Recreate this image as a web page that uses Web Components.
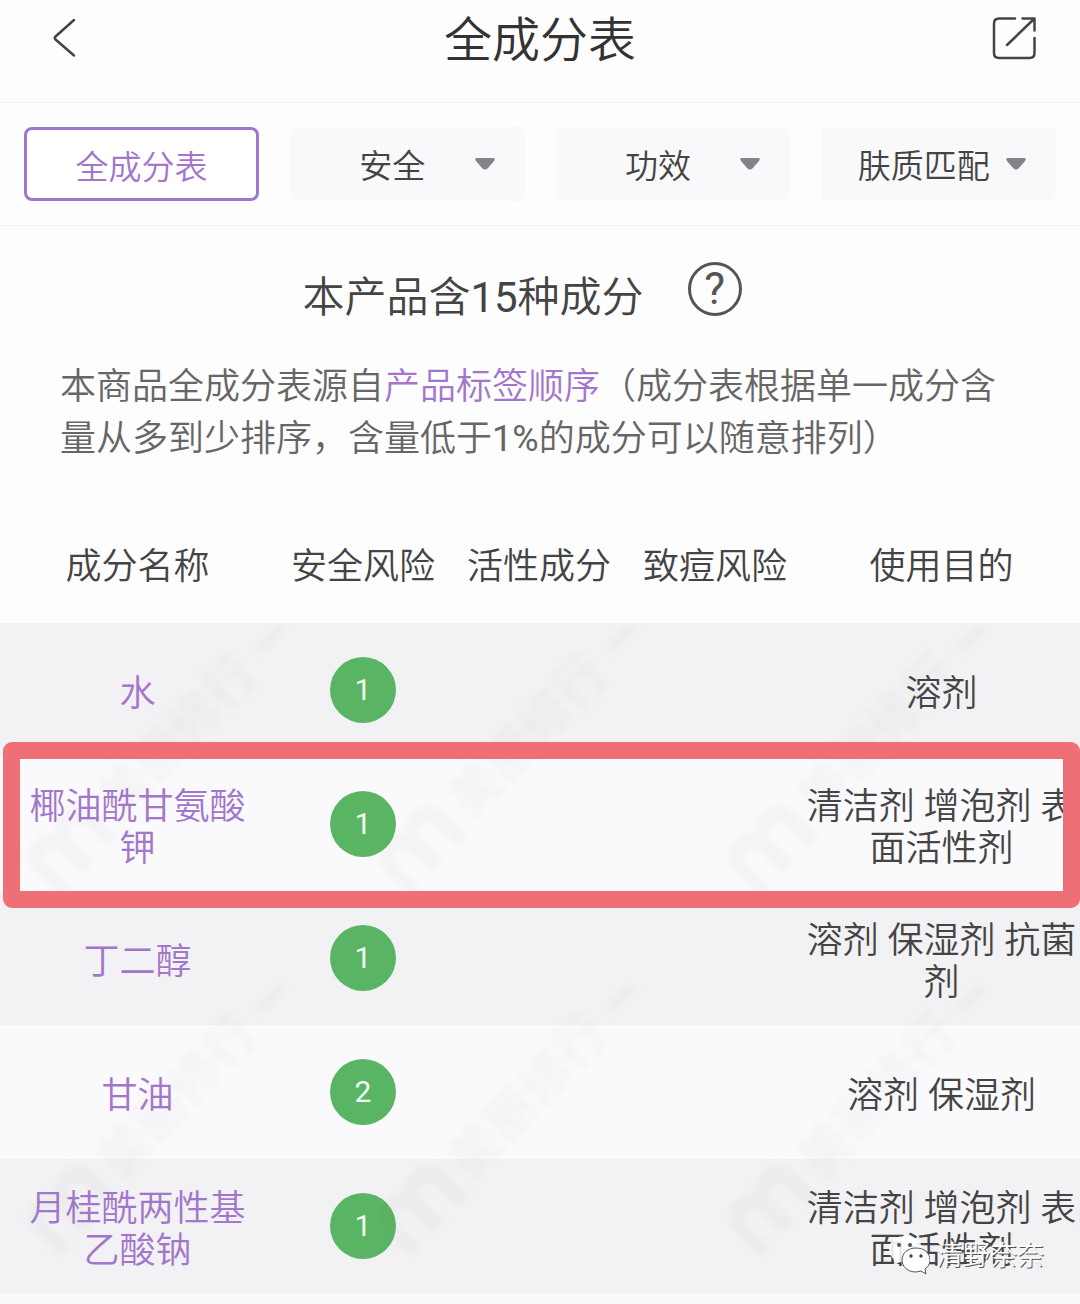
<!DOCTYPE html>
<html lang="zh-CN">
<head>
<meta charset="utf-8">
<meta name="viewport" content="width=device-width, initial-scale=1">
<title>全成分表</title>
<style>
  body {
    margin: 0;
    background: #fefdfe;
    color: #444;
    font-family: Roboto, "Noto Sans CJK SC", sans-serif;
    font-weight: 350;
    --purple: #a376cc;
    --line: #f1f0f2;
  }
</style>
</head>
<body>
<ingredient-page></ingredient-page>

<script>
class TopBar extends HTMLElement {
  constructor() {
    super();
    this.attachShadow({ mode: "open" });
    this.shadowRoot.innerHTML = `
      <style>
        :host {
          display: grid;
          grid-template-columns: 1fr auto 1fr;
          align-items: center;
          padding: 0 44px 24px;
          border-bottom: 1px solid var(--line);
        }
        h1 {
          margin: 0;
          padding-top: 4px;
          font-size: 48px;
          line-height: 74px;
          font-weight: 350;
          color: #333;
        }
        button {
          width: 44px;
          height: 44px;
          padding: 0;
          border: 0;
          background: none;
          cursor: pointer;
        }
        button:last-child {
          justify-self: end;
        }
        svg {
          display: block;
          fill: none;
          stroke: #444;
          stroke-width: 2.5;
          stroke-linecap: round;
          stroke-linejoin: round;
        }
      </style>
      <button aria-label="返回">
        <svg width="44" height="44" viewBox="0 0 44 44"><path d="M30 3 11.500 19.500q-1.500 1.500 0 3L30 38.500"/></svg>
      </button>
      <h1><slot></slot></h1>
      <button aria-label="分享">
        <svg width="44" height="44" viewBox="0 0 44 44">
          <path d="M23 1.500H7q-5 0-5 5v29.500q0 5 5 5h30.500q5 0 5-5V21M30.500 1.500h12v12M42 2 15 28"/>
        </svg>
      </button>
    `;
  }
}

class FilterTab extends HTMLElement {
  constructor() {
    super();
    this.attachShadow({ mode: "open" });
  }

  connectedCallback() {
    const label = this.getAttribute("label");
    const control = this.hasAttribute("active")
      ? `<button aria-pressed="true">${label}</button>`
      : `<select aria-label="${label}"><option>${label}</option></select>
         <svg width="20" height="12" viewBox="0 0 20 12"><path d="M2 0h16q3 0 1 3l-6 7q-3 3-6 0L1 3Q-1 0 2 0z"/></svg>`;
    this.shadowRoot.innerHTML = `
      <style>
        :host {
          display: block;
          position: relative;
        }
        button, select {
          display: block;
          box-sizing: border-box;
          width: 100%;
          height: 74px;
          margin: 0;
          border-radius: 8px;
          font: inherit;
          font-size: 33px;
          text-align: center;
        }
        button {
          padding: 2px 0 0;
          border: 3px solid var(--purple);
          background: #fff;
          color: var(--purple);
        }
        select {
          appearance: none;
          padding: 5px 30px 0 0;
          border: 0;
          background: #f9f8fa;
          color: #444;
        }
        svg {
          position: absolute;
          right: 30px;
          top: 31px;
          fill: #858387;
          pointer-events: none;
        }
      </style>
      ${control}
    `;
  }
}

class FilterBar extends HTMLElement {
  constructor() {
    super();
    this.attachShadow({ mode: "open" });
    this.shadowRoot.innerHTML = `
      <style>
        :host {
          display: grid;
          grid-template-columns: repeat(4, 1fr);
          gap: 31px;
          padding: 24px;
          border-bottom: 1px solid var(--line);
        }
      </style>
      <slot></slot>
    `;
  }
}

class ProductIntro extends HTMLElement {
  constructor() {
    super();
    this.attachShadow({ mode: "open" });
    this.shadowRoot.innerHTML = `
      <style>
        :host {
          display: block;
          padding: 36px 60px 42px;
        }
        .head {
          display: flex;
          justify-content: center;
          align-items: flex-start;
          gap: 44px;
          padding-right: 36px;
          margin-bottom: 27px;
        }
        h2 {
          margin: 0;
          font-size: 42px;
          line-height: 72px;
          font-weight: 350;
        }
        button {
          box-sizing: border-box;
          width: 54px;
          height: 54px;
          padding: 0;
          border: 3px solid #555;
          border-radius: 50%;
          background: none;
          color: #555;
          font: inherit;
          font-size: 44px;
          font-weight: 400;
          line-height: 48px;
        }
        p {
          margin: 0;
          font-size: 36px;
          line-height: 52px;
          color: #666;
        }
      </style>
      <div class="head">
        <h2><slot name="title"></slot></h2>
        <button aria-label="说明">?</button>
      </div>
      <p><slot></slot></p>
    `;
  }
}

class RiskBadge extends HTMLElement {
  constructor() {
    super();
    this.attachShadow({ mode: "open" });
    this.shadowRoot.innerHTML = `
      <style>
        :host {
          display: block;
          width: 66px;
          height: 66px;
          margin: 0 auto;
          border-radius: 50%;
          background: #59b564;
          color: #f4fbf4;
          font-size: 30px;
          font-weight: 400;
          line-height: 66px;
          text-align: center;
        }
      </style>
      <slot></slot>
    `;
  }
}

const INGREDIENTS = [
  { name: "水", risk: 1, use: "溶剂" },
  { name: "椰油酰甘氨酸钾", risk: 1, use: "清洁剂 增泡剂 表面活性剂", marked: true },
  { name: "丁二醇", risk: 1, use: "溶剂 保湿剂 抗菌剂" },
  { name: "甘油", risk: 2, use: "溶剂 保湿剂" },
  { name: "月桂酰两性基乙酸钠", risk: 1, use: "清洁剂 增泡剂 表面活性剂" },
];

class IngredientTable extends HTMLElement {
  constructor() {
    super();
    this.attachShadow({ mode: "open" });
  }

  connectedCallback() {
    this.shadowRoot.innerHTML = `
      <style>
        :host {
          display: block;
          position: relative;
          flex: 1;
          background: linear-gradient(transparent 116px, #faf9fc 116px);
          overflow: hidden;
        }
        table {
          width: 100%;
          table-layout: fixed;
          border-collapse: collapse;
          font-size: 36px;
          line-height: 42px;
          text-align: center;
        }
        col.name { width: 275px; }
        col.flag { width: 176px; }
        th, td {
          box-sizing: border-box;
        }
        th {
          height: 116px;
          padding: 4px 0 0;
          font-weight: 350;
        }
        tbody tr {
          position: relative;
        }
        tbody tr:nth-child(odd) {
          background: #f2f1f4;
        }
        /* the outline spills over the rows above and below */
        tbody tr.marked {
          z-index: 1;
        }
        td {
          height: 134px;
          padding: 0;
        }
        td:first-child {
          padding: 8px 24px 0;
        }
        td:last-child {
          padding-top: 8px;
        }
        a {
          color: var(--purple);
          text-decoration: none;
        }
        .mark {
          position: absolute;
          inset: -15px 0 -17px 3px;
          border: 17px solid #ee6f75;
          border-radius: 9px;
          pointer-events: none;
        }
        .water {
          position: absolute;
          left: 0;
          top: 116px;
          width: 100%;
          height: calc(100% - 116px);
          pointer-events: none;
        }
      </style>
      <table>
        <colgroup><col class="name"><col class="flag"><col class="flag"><col class="flag"><col></colgroup>
        <thead>
          <tr><th>成分名称</th><th>安全风险</th><th>活性成分</th><th>致痘风险</th><th>使用目的</th></tr>
        </thead>
        <tbody>${INGREDIENTS.map(this.#row).join("")}</tbody>
      </table>
      <svg class="water" aria-hidden="true">
        <defs>
          <filter id="soft"><feGaussianBlur stdDeviation="3"/></filter>
          <pattern id="tile" y="-36" width="350" height="360" patternUnits="userSpaceOnUse">
            <g transform="translate(66 266) rotate(-46)" fill="#555" opacity="0.04" filter="url(#soft)">
              <path d="M-34 26V-10q0-20 22-20 13 0 18 9 7-9 20-9 22 0 22 22v34H34V-4q0-11-10-11-11 0-11 12v29H-3V-4q0-11-9-11-10 0-10 12v29z"/>
              <text x="62" y="16" font-size="50" font-weight="700">美丽修行</text>
              <path d="M280-6h34v8h-34z"/>
            </g>
          </pattern>
        </defs>
        <rect width="100%" height="100%" fill="url(#tile)"/>
      </svg>
    `;
  }

  #row = ({ name, risk, use, marked }) => `
    <tr class="${marked ? "marked" : ""}">
      <td><a href="#">${name}</a></td>
      <td><risk-badge>${risk}</risk-badge></td>
      <td></td>
      <td></td>
      <td>${use}${marked ? '<span class="mark"></span>' : ""}</td>
    </tr>`;
}

class AccountStamp extends HTMLElement {
  constructor() {
    super();
    this.attachShadow({ mode: "open" });
    this.shadowRoot.innerHTML = `
      <style>
        :host {
          position: absolute;
          right: 36px;
          bottom: 28px;
          display: flex;
          align-items: center;
          gap: 6px;
          color: #fff;
          font-size: 27px;
          line-height: 40px;
          text-shadow: 1px 1px 0 #555;
        }
        span {
          padding-top: 3px;
        }
      </style>
      <svg width="42" height="40" viewBox="0 0 42 40" aria-hidden="true">
        <path d="M17 1C7 1 1 7 1 14c0 5 2 8 6 11l-2 6 7-4c14 3 22-4 22-13C34 6 26 1 17 1z" fill="#fff" fill-opacity=".88"/>
        <circle cx="11" cy="10" r="2" fill="#555"/><circle cx="22" cy="10" r="2" fill="#555"/>
        <path d="M28 13c-8 0-14 5-14 12s6 12 14 12l5-1 5 3-1-5c3-2 5-5 5-9 0-7-6-12-14-12z" fill="#fff" stroke="#555" stroke-width="1"/>
        <circle cx="23" cy="21" r="1.700" fill="#444"/><circle cx="33" cy="21" r="1.700" fill="#444"/>
      </svg>
      <span><slot></slot></span>
    `;
  }
}

class IngredientPage extends HTMLElement {
  constructor() {
    super();
    this.attachShadow({ mode: "open" });
    this.shadowRoot.innerHTML = `
      <style>
        :host {
          display: flex;
          flex-direction: column;
          position: relative;
          min-height: 100vh;
        }
        a {
          color: var(--purple);
          text-decoration: none;
        }
        .num {
          font-weight: 400;
        }
      </style>
      <top-bar>全成分表</top-bar>
      <filter-bar>
        <filter-tab label="全成分表" active></filter-tab>
        <filter-tab label="安全"></filter-tab>
        <filter-tab label="功效"></filter-tab>
        <filter-tab label="肤质匹配"></filter-tab>
      </filter-bar>
      <product-intro>
        <span slot="title">本产品含<span class="num">15</span>种成分</span>
        本商品全成分表源自<a href="#">产品标签顺序</a>（成分表根据单一成分含量从多到少排序，含量低于<span class="num">1%</span>的成分可以随意排列）
      </product-intro>
      <ingredient-table></ingredient-table>
      <account-stamp>清野奈奈</account-stamp>
    `;
  }
}

customElements.define("top-bar", TopBar);
customElements.define("filter-tab", FilterTab);
customElements.define("filter-bar", FilterBar);
customElements.define("product-intro", ProductIntro);
customElements.define("risk-badge", RiskBadge);
customElements.define("ingredient-table", IngredientTable);
customElements.define("account-stamp", AccountStamp);
customElements.define("ingredient-page", IngredientPage);
</script>
</body>
</html>
